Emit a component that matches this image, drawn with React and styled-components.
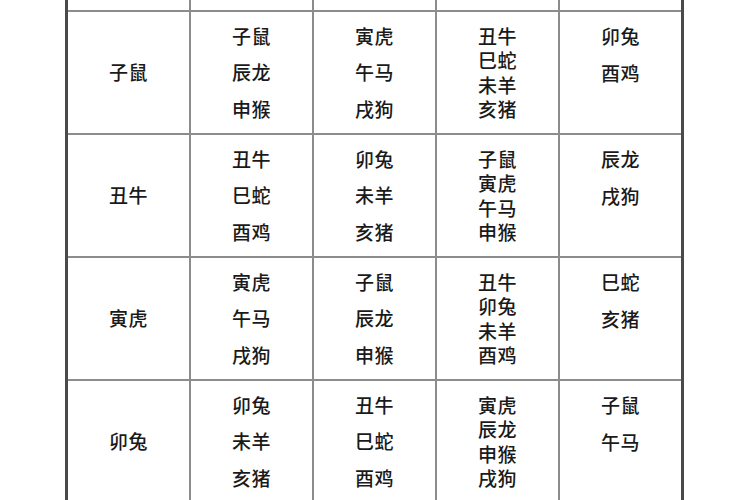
import styled, { createGlobalStyle } from "styled-components";

const GlobalStyle = createGlobalStyle`
  html, body {
    margin: 0;
    padding: 0;
    background: #fff;
    overflow: hidden;
  }
  body {
    font-family: "Noto Sans CJK SC", "Noto Sans", sans-serif;
    color: #1a1a1a;
  }
`;

const Page = styled.div`
  width: 750px;
  height: 500px;
  overflow: hidden;
  background: #fff;
`;

const Grid = styled.div`
  margin-left: 65px;
  width: 613px;
  display: grid;
  grid-template-columns: repeat(5, 121px);
  grid-template-rows: 10px repeat(4, 121px);
  gap: 2px;
  background: #8c8c8c;
  border-left: 3px solid #4a4a4a;
  border-right: 3px solid #4a4a4a;
`;

const Cell = styled.div`
  background: #fff;
  display: flex;
  flex-direction: column;
  align-items: center;
  justify-content: ${(p) => (p.$top ? "flex-start" : "center")};
  padding-top: ${(p) => (p.$top ? "6px" : "0")};
  box-sizing: border-box;
  font-size: 19px;
  font-weight: 500;
  line-height: ${(p) => (p.$tight ? "24.5px" : "36.5px")};
  letter-spacing: 0.5px;
  white-space: nowrap;
`;

const rows = [
  {
    name: "子鼠",
    a: ["子鼠", "辰龙", "申猴"],
    b: ["寅虎", "午马", "戌狗"],
    c: ["丑牛", "巳蛇", "未羊", "亥猪"],
    d: ["卯兔", "酉鸡"],
  },
  {
    name: "丑牛",
    a: ["丑牛", "巳蛇", "酉鸡"],
    b: ["卯兔", "未羊", "亥猪"],
    c: ["子鼠", "寅虎", "午马", "申猴"],
    d: ["辰龙", "戌狗"],
  },
  {
    name: "寅虎",
    a: ["寅虎", "午马", "戌狗"],
    b: ["子鼠", "辰龙", "申猴"],
    c: ["丑牛", "卯兔", "未羊", "酉鸡"],
    d: ["巳蛇", "亥猪"],
  },
  {
    name: "卯兔",
    a: ["卯兔", "未羊", "亥猪"],
    b: ["丑牛", "巳蛇", "酉鸡"],
    c: ["寅虎", "辰龙", "申猴", "戌狗"],
    d: ["子鼠", "午马"],
  },
];

const Lines = ({ items }) => items.map((t) => <div key={t}>{t}</div>);

export default function App() {
  return (
    <Page>
      <GlobalStyle />
      <Grid>
        {[0, 1, 2, 3, 4].map((i) => (
          <Cell key={"h" + i} />
        ))}
        {rows.map((r) => [
          <Cell key={r.name + "n"}>{r.name}</Cell>,
          <Cell key={r.name + "a"}>
            <Lines items={r.a} />
          </Cell>,
          <Cell key={r.name + "b"}>
            <Lines items={r.b} />
          </Cell>,
          <Cell key={r.name + "c"} $tight>
            <Lines items={r.c} />
          </Cell>,
          <Cell key={r.name + "d"} $top>
            <Lines items={r.d} />
          </Cell>,
        ])}
      </Grid>
    </Page>
  );
}
